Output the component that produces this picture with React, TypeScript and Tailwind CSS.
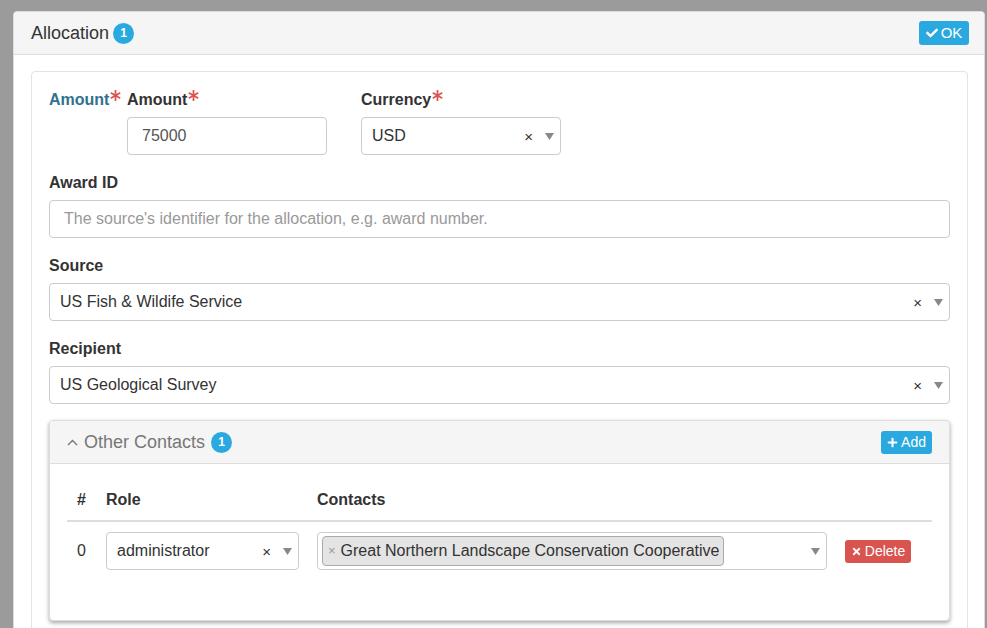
import { FaAsterisk, FaCheck, FaPlus, FaTimes } from "react-icons/fa";

function Badge() {
  return (
    <span className="inline-flex items-center justify-center w-[21px] h-[21px] rounded-full bg-[#29a9e0] text-white text-[12px] font-bold leading-none">
      1
    </span>
  );
}

function Req() {
  return <FaAsterisk className="inline-block ml-[1px] -mt-[10px] text-[#d9534f]" size={11} />;
}

function Caret() {
  return (
    <svg width="9" height="7" viewBox="0 0 9 7" className="shrink-0">
      <path d="M0 0 L9 0 L4.5 7 Z" fill="#888" />
    </svg>
  );
}

function Select({ value, clear = true, width = "w-full" }: { value: string; clear?: boolean; width?: string }) {
  return (
    <div className={`${width} h-[38px] flex items-center border border-[#ccc] rounded-[4px] bg-white pl-[10px] pr-[6px] text-[16px] text-[#333]`}>
      <span className="flex-1 truncate">{value}</span>
      {clear && <span className="text-[15px] text-[#333] mr-[12px] leading-none">×</span>}
      <Caret />
    </div>
  );
}

function Label({ text, req }: { text: string; req?: boolean }) {
  return (
    <div className="h-[21px] pt-[1px] mb-2 text-[16px] font-bold text-[#333] leading-[21px]">
      {text}
      {req && <Req />}
    </div>
  );
}

function OtherContacts() {
  return (
    <div className="mt-4 border border-[#ddd] rounded-[4px] bg-white shadow-[0_2px_4px_rgba(0,0,0,0.35)]">
      <div className="h-[43px] bg-[#f5f5f5] border-b border-[#ddd] rounded-t-[4px] flex items-center pl-[17px] pr-[17px]">
        <svg width="11" height="7" viewBox="0 0 11 7" className="mr-[6px]">
          <polyline points="1,6 5.5,1.5 10,6" fill="none" stroke="#777" strokeWidth="1.4" />
        </svg>
        <span className="text-[18px] text-[#777] mr-[6px]">Other Contacts</span>
        <Badge />
        <div className="flex-1" />
        <button className="h-[23px] px-[6px] flex items-center gap-[3px] rounded-[3px] bg-[#29a9e0] text-white text-[14px]">
          <FaPlus size={11} />
          Add
        </button>
      </div>
      <div className="px-[17px] pt-[15px] pb-[50px]">
        <div className="grid grid-cols-[39px_211px_528px_1fr] h-[43px] items-center border-b-2 border-[#ddd] text-[16px] font-bold text-[#333]">
          <span className="pl-[10px]">#</span>
          <span>Role</span>
          <span>Contacts</span>
          <span />
        </div>
        <div className="grid grid-cols-[39px_211px_528px_1fr] items-center pt-[10px] text-[16px] text-[#333]">
          <span className="pl-[10px]">0</span>
          <Select value="administrator" width="w-[193px]" />
          <div className="w-[510px] h-[38px] flex items-center border border-[#ccc] rounded-[4px] bg-white pl-[4px] pr-[6px]">
            <span className="h-[30px] flex items-center border border-[#aaa] rounded-[4px] bg-[#e4e4e4] pl-[5px] pr-[4px] text-[#333]">
              <span className="text-[#999] text-[13px] mr-[5px]">×</span>
              Great Northern Landscape Conservation Cooperative
            </span>
            <div className="flex-1" />
            <Caret />
          </div>
          <button className="w-[66px] h-[23px] flex items-center justify-center gap-[3px] rounded-[3px] bg-[#d9534f] text-white text-[14px]">
            <FaTimes size={11} />
            Delete
          </button>
        </div>
      </div>
    </div>
  );
}

export default function App() {
  return (
    <div className="h-[628px] overflow-hidden bg-[#9b9b9b] pt-[11px] pl-[13px] pr-[2px] font-['Liberation_Sans',Arial,sans-serif]">
      <div className="bg-white border border-[#ddd] rounded-t-[4px] min-h-[700px]">
        <div className="h-[43px] bg-[#f5f5f5] border-b border-[#ddd] rounded-t-[4px] flex items-center pl-[17px] pr-[15px]">
          <span className="text-[18px] text-[#333] mr-[4px]">Allocation</span>
          <Badge />
          <div className="flex-1" />
          <button className="h-[24px] w-[50px] flex items-center justify-center gap-[3px] rounded-[3px] bg-[#29a9e0] text-white text-[15px]">
            <FaCheck size={12} />
            OK
          </button>
        </div>
        <div className="pt-[16px] pl-[17px] pr-[16px]">
          <div className="border border-[#e3e3e3] rounded-[4px] bg-white pt-[16px] px-[17px] pb-[20px]">
            <div className="flex">
              <div className="w-[78px] h-[21px] pt-[1px] text-[16px] font-bold text-[#31708f] leading-[21px]">
                Amount
                <Req />
              </div>
              <div className="w-[200px]">
                <Label text="Amount" req />
                <div className="h-[38px] flex items-center border border-[#ccc] rounded-[4px] pl-[14px] text-[16px] text-[#555]">75000</div>
              </div>
              <div className="w-[200px] ml-[34px]">
                <Label text="Currency" req />
                <Select value="USD" />
              </div>
            </div>
            <div className="mt-4">
              <Label text="Award ID" />
              <div className="h-[38px] flex items-center border border-[#ccc] rounded-[4px] pl-[14px] text-[16px] text-[#999]">
                The source's identifier for the allocation, e.g. award number.
              </div>
            </div>
            <div className="mt-4">
              <Label text="Source" />
              <Select value="US Fish & Wildife Service" />
            </div>
            <div className="mt-4">
              <Label text="Recipient" />
              <Select value="US Geological Survey" />
            </div>
            <OtherContacts />
          </div>
        </div>
      </div>
    </div>
  );
}
